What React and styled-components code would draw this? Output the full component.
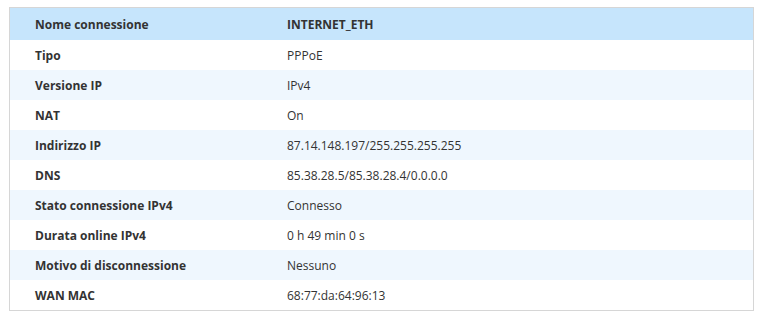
import React from "react";
import styled, { createGlobalStyle } from "styled-components";

const Global = createGlobalStyle`
  html, body { margin: 0; padding: 0; background: #fff; }
  body { font-family: "Open Sans", "Noto Sans", sans-serif; }
`;

const Page = styled.div`
  padding: 7px 8px 8px 9px;
`;

const Table = styled.div`
  border: 1px solid #d6d6d6;
  width: 743px;
`;

const Row = styled.div`
  display: grid;
  grid-template-columns: 252px 1fr;
  align-items: center;
  height: ${(p) => (p.$head ? 32 : 30)}px;
  background: ${(p) => (p.$head ? "#c6e5fc" : p.$alt ? "#eff7fe" : "#ffffff")};
`;

const Label = styled.div`
  padding-left: 25px;
  font-size: 12px;
  font-weight: 700;
  color: #333;
`;

const Value = styled.div`
  padding-left: 25px;
  font-size: 12px;
  font-weight: ${(p) => (p.$head ? 700 : 400)};
  color: #333;
`;

const rows = [
  ["Tipo", "PPPoE"],
  ["Versione IP", "IPv4"],
  ["NAT", "On"],
  ["Indirizzo IP", "87.14.148.197/255.255.255.255"],
  ["DNS", "85.38.28.5/85.38.28.4/0.0.0.0"],
  ["Stato connessione IPv4", "Connesso"],
  ["Durata online IPv4", "0 h 49 min 0 s"],
  ["Motivo di disconnessione", "Nessuno"],
  ["WAN MAC", "68:77:da:64:96:13"],
];

export default function App() {
  return (
    <Page>
      <Global />
      <Table>
        <Row $head>
          <Label>Nome connessione</Label>
          <Value $head>INTERNET_ETH</Value>
        </Row>
        {rows.map(([l, v], i) => (
          <Row key={l} $alt={i % 2 === 1}>
            <Label>{l}</Label>
            <Value>{v}</Value>
          </Row>
        ))}
      </Table>
    </Page>
  );
}
